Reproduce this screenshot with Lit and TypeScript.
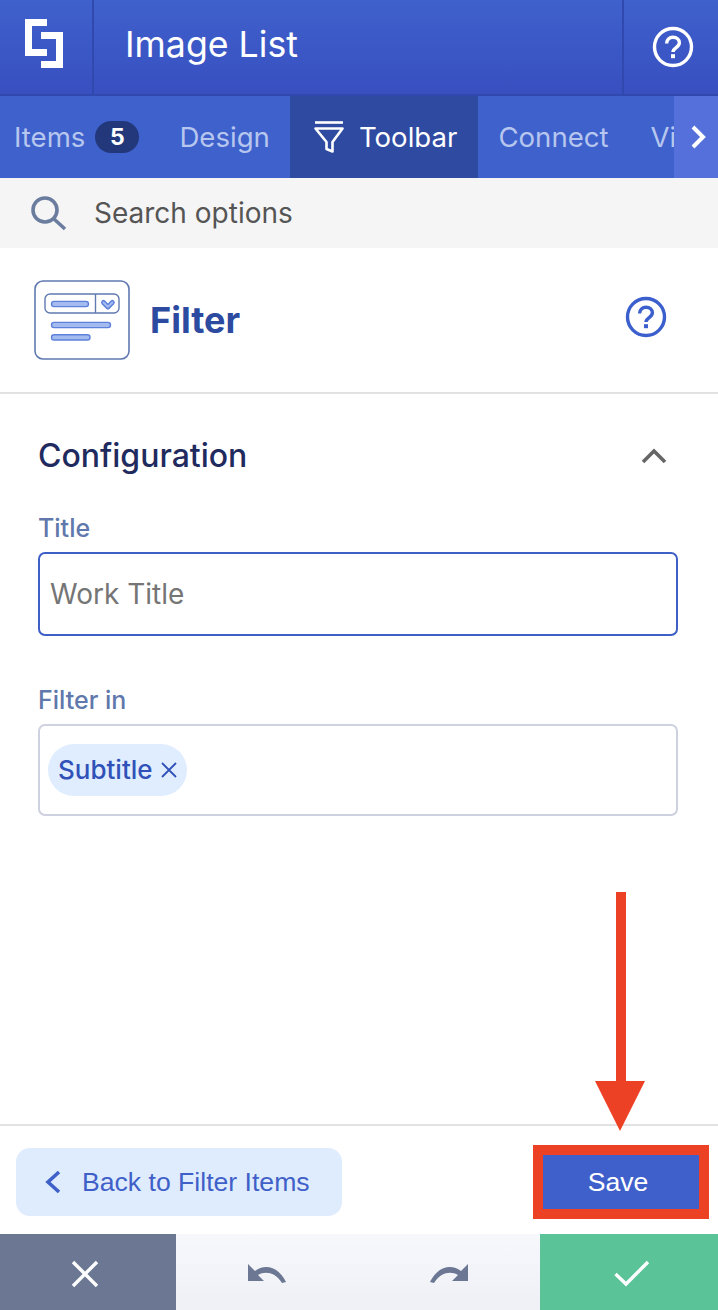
import { LitElement, html, css } from 'lit';
import { customElement } from 'lit/decorators.js';

const helpIcon = html`<svg width="42" height="42" viewBox="0 0 42 42" fill="none" stroke="currentColor">
  <circle cx="21" cy="21" r="18.5" stroke-width="3.4"></circle>
  <path d="M14.6 17.4c0-3.8 2.8-6.1 6.4-6.1s6.400 2.300 6.400 5.500c0 4.700-6.400 4.700-6.400 9.200" stroke-width="3.400"></path>
  <rect x="19" y="28.200" width="4" height="4" fill="currentColor" stroke="none"></rect>
</svg>`;

@customElement('app-root')
export class AppRoot extends LitElement {
  static styles = css`
    :host {
      display: flex;
      flex-direction: column;
      position: relative;
      width: 718px;
      height: 1310px;
      overflow: hidden;
      background: #fff;
      font-family: Inter, 'Liberation Sans', sans-serif;
    }

    .header {
      display: flex;
      height: 96px;
      box-sizing: border-box;
      background: linear-gradient(#3f61cc, #384fc0);
      border-bottom: 2px solid #3148ae;
      color: #fff;
    }
    .logo {
      width: 94px;
      box-sizing: border-box;
      padding: 0 4px 9px 0;
      display: flex;
      align-items: center;
      justify-content: center;
      border-right: 2px solid #3148ae;
    }
    .app-title {
      flex: 1;
      padding-left: 31px;
      font-size: 35.7px;
      line-height: 88px;
    }
    .help {
      width: 96px;
      box-sizing: border-box;
      padding-left: 4px;
      display: flex;
      align-items: center;
      justify-content: center;
      border-left: 2px solid #3148ae;
    }

    .tabs {
      position: relative;
      display: flex;
      height: 82px;
      overflow: hidden;
      background: #3e61cc;
      font-size: 27.6px;
      color: #b7c6ee;
    }
    .tab-track {
      display: flex;
      margin-left: -7px;
      white-space: nowrap;
    }
    .tab {
      display: flex;
      align-items: center;
      padding: 0 20px 0 21px;
    }
    .tab:first-child {
      padding-right: 19px;
    }
    .tab:last-child {
      padding-left: 22px;
    }
    .tab.active {
      gap: 14px;
      margin-right: -1px;
      background: #2f4aa1;
      color: #fff;
      padding-left: 23px;
      padding-right: 21px;
    }
    .badge {
      margin-left: 10px;
      width: 44px;
      height: 32px;
      border-radius: 16px;
      background: #22387b;
      color: #fff;
      font-size: 23px;
      font-weight: 700;
      line-height: 32px;
      text-align: center;
    }
    .more {
      position: absolute;
      right: 0;
      top: 0;
      width: 44px;
      height: 82px;
      box-sizing: border-box;
      padding-left: 3px;
      display: flex;
      align-items: center;
      justify-content: center;
      background: #5570da;
    }

    .search {
      display: flex;
      align-items: center;
      gap: 26px;
      height: 70px;
      padding-left: 30px;
      background: #f5f5f5;
      color: #555;
      font-size: 28px;
    }

    .widget {
      display: flex;
      align-items: center;
      height: 146px;
      box-sizing: border-box;
      padding: 0 51px 0 34px;
      border-bottom: 2px solid #e2e2e2;
    }
    .widget-name {
      flex: 1;
      margin-left: 20px;
      font-size: 36px;
      font-weight: 700;
      color: #2c4aa0;
    }
    .widget-help {
      color: #3b5fcc;
      display: flex;
      margin-top: -6px;
    }

    .content {
      flex: 1;
      padding: 0 40px 0 38px;
    }
    .section-head {
      display: flex;
      align-items: center;
      justify-content: space-between;
      height: 36px;
      margin-top: 44px;
      padding-right: 11px;
      font-size: 32px;
      font-weight: 500;
      color: #1f2a5e;
    }
    .section-head span {
      margin-top: -2px;
    }
    .label {
      margin-top: 39px;
      height: 30px;
      font-size: 25px;
      font-weight: 500;
      line-height: 30px;
      color: #6078ab;
    }
    .field {
      margin-top: 9px;
      box-sizing: border-box;
      height: 84px;
      padding-left: 10px;
      display: flex;
      align-items: center;
      border: 2px solid #3e5fc6;
      border-radius: 7px;
      font-size: 28px;
      color: #757575;
    }
    .label.second {
      margin-top: 49px;
    }
    .tag-field {
      margin-top: 9px;
      box-sizing: border-box;
      height: 92px;
      padding-left: 8px;
      display: flex;
      align-items: center;
      border: 2px solid #cdd1e0;
      border-radius: 7px;
    }
    .chip {
      display: flex;
      align-items: center;
      gap: 8px;
      height: 52px;
      box-sizing: border-box;
      padding: 0 10px 2px;
      border-radius: 26px;
      background: #e0edff;
      color: #3052b8;
      font-size: 26px;
      font-weight: 500;
    }
    .chip svg {
      margin-top: 2px;
    }

    .actions {
      display: flex;
      align-items: center;
      justify-content: space-between;
      height: 110px;
      box-sizing: border-box;
      padding: 4px 19px 0 16px;
      border-top: 2px solid #e2e2e2;
      font-family: 'Liberation Sans', Arial, sans-serif;
      font-size: 26.6px;
    }
    .back {
      display: flex;
      align-items: center;
      gap: 21px;
      width: 326px;
      height: 68px;
      box-sizing: border-box;
      padding-left: 29px;
      border-radius: 14px;
      background: #dfecfe;
      color: #3f60c8;
    }
    .save {
      width: 156px;
      height: 54px;
      box-sizing: border-box;
      padding-right: 6px;
      display: flex;
      align-items: center;
      justify-content: center;
      background: #3f60cb;
      color: #fff;
    }

    .bottom {
      display: flex;
      height: 76px;
    }
    .bottom > div {
      display: flex;
      align-items: center;
      justify-content: center;
      box-sizing: border-box;
      padding-top: 4px;
    }
    .cancel {
      width: 176px;
      padding-right: 6px;
      background: #6b7793;
    }
    .history {
      flex: 1;
      background: linear-gradient(#f7f8fc, #eff0f5);
    }
    .history > span {
      flex: 1;
      display: flex;
      justify-content: center;
    }
    .confirm {
      width: 178px;
      padding-left: 6px;
      background: #5ac398;
    }

    .mark-box {
      position: absolute;
      left: 533px;
      top: 1145px;
      width: 176px;
      height: 74px;
      box-sizing: border-box;
      border: 10px solid #ec4124;
    }
    .mark-arrow {
      position: absolute;
      left: 595px;
      top: 892px;
    }
  `;

  render() {
    return html`
      <div class="header">
        <div class="logo">
          <svg width="40" height="50" viewBox="0 0 40 50" fill="#fff">
            <path d="M1 1h22v7H8v23h15v7H1z"></path>
            <path d="M17 14h22v36H17v-7h15V21H17z"></path>
          </svg>
        </div>
        <div class="app-title">Image List</div>
        <div class="help">${helpIcon}</div>
      </div>

      <div class="tabs">
        <div class="tab-track">
          <div class="tab">Items<span class="badge">5</span></div>
          <div class="tab">Design</div>
          <div class="tab active">
            <svg width="32" height="32" viewBox="0 0 32 32" fill="none" stroke="#fff" stroke-width="2.600">
              <path d="M2 1.500h28"></path>
              <path d="M2.500 7.500h27L19.500 21v9.500l-6-2.500v-7z" stroke-linejoin="round"></path>
            </svg>
            Toolbar
          </div>
          <div class="tab">Connect</div>
          <div class="tab">Video</div>
        </div>
        <div class="more">
          <svg width="18" height="26" viewBox="0 0 18 26" fill="none" stroke="#fff" stroke-width="4">
            <path d="M4 3l10 10L4 23"></path>
          </svg>
        </div>
      </div>

      <div class="search">
        <svg width="38" height="36" viewBox="0 0 38 36" fill="none" stroke="#6b7d9f" stroke-width="3.600">
          <circle cx="15" cy="15" r="12"></circle>
          <path d="M24 24l11 10"></path>
        </svg>
        <span>Search options</span>
      </div>

      <div class="widget">
        <svg width="96" height="80" viewBox="0 0 96 80" fill="none">
          <rect x="1" y="1" width="94" height="78" rx="8" stroke="#6079b0" stroke-width="1.600"></rect>
          <rect x="11" y="14" width="74" height="19" rx="5" stroke="#6079b0" stroke-width="1.400"></rect>
          <path d="M61.500 14v19" stroke="#6079b0" stroke-width="1.400"></path>
          <g fill="#a3bbee" stroke="#5f81dc" stroke-width="1.400">
            <rect x="17.500" y="21.400" width="37" height="5.200" rx="2.600"></rect>
            <rect x="17.500" y="42.400" width="59" height="5.200" rx="2.600"></rect>
            <rect x="17.500" y="54.800" width="38.500" height="5.200" rx="2.600"></rect>
          </g>
          <path d="M69.500 22.500l4.400 4.400 4.400-4.400" stroke="#5f81dc" stroke-width="5" stroke-linecap="round" stroke-linejoin="round"></path>
          <path d="M69.500 22.500l4.400 4.400 4.400-4.400" stroke="#a3bbee" stroke-width="2" stroke-linecap="round" stroke-linejoin="round"></path>
        </svg>
        <div class="widget-name">Filter</div>
        <div class="widget-help">${helpIcon}</div>
      </div>

      <div class="content">
        <div class="section-head">
          <span>Configuration</span>
          <svg width="26" height="16" viewBox="0 0 26 16" fill="none" stroke="#666" stroke-width="3.600">
            <path d="M2 14L13 3l11 11"></path>
          </svg>
        </div>
        <div class="label">Title</div>
        <div class="field">Work Title</div>
        <div class="label second">Filter in</div>
        <div class="tag-field">
          <div class="chip">
            Subtitle
            <svg width="16" height="16" viewBox="0 0 16 16" fill="none" stroke="#3052b8" stroke-width="1.800">
              <path d="M1 1l14 14M15 1L1 15"></path>
            </svg>
          </div>
        </div>
      </div>

      <div class="actions">
        <div class="back">
          <svg width="16" height="24" viewBox="0 0 16 24" fill="none" stroke="#3f60c8" stroke-width="3.600">
            <path d="M14 2L3 12l11 10"></path>
          </svg>
          Back to Filter Items
        </div>
        <div class="save">Save</div>
      </div>

      <div class="bottom">
        <div class="cancel">
          <svg width="28" height="28" viewBox="0 0 28 28" fill="none" stroke="#fff" stroke-width="3.400">
            <path d="M2 2l24 24M26 2L2 26"></path>
          </svg>
        </div>
        <div class="history">
          <span>
            <svg width="40" height="20" viewBox="0 0 40 20" fill="#6b7793">
              <path d="M1 0v17h16l-6-6c7-4 17-3 24 8l4-1C32 3 18-1 8 7z"></path>
            </svg>
          </span>
          <span>
            <svg width="40" height="20" viewBox="0 0 40 20" fill="#6b7793">
              <path d="M39 0v17H23l6-6C22 7 12 8 5 19l-4-1C8 3 22-1 32 7z"></path>
            </svg>
          </span>
        </div>
        <div class="confirm">
          <svg width="36" height="28" viewBox="0 0 36 28" fill="none" stroke="#fff" stroke-width="3.400">
            <path d="M1.500 14l10.500 10L34 2"></path>
          </svg>
        </div>
      </div>

      <div class="mark-box"></div>
      <svg class="mark-arrow" width="50" height="240" viewBox="0 0 50 240" fill="#ec4124">
        <path d="M21 0h10v189h19l-25 50-25-50h21z"></path>
      </svg>
    `;
  }
}
